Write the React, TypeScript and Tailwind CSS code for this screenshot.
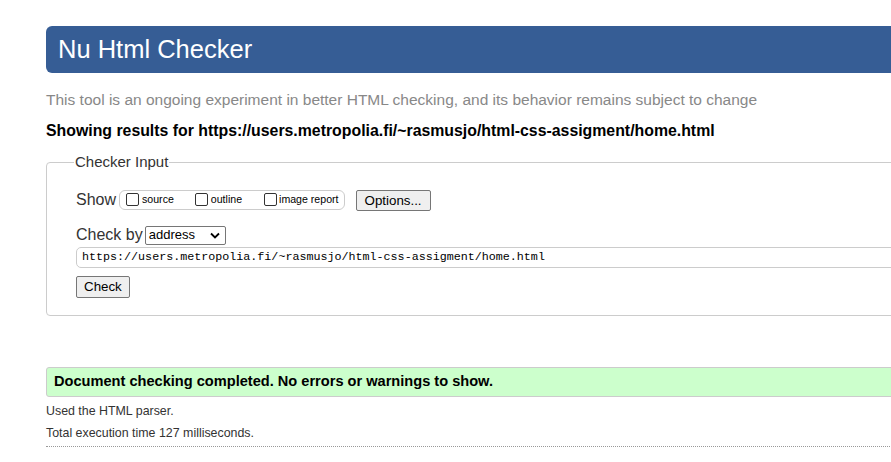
export default function App() {
  return (
    <div className="h-[462px] w-[891px] overflow-hidden bg-white font-['Liberation_Sans',Arial,sans-serif] text-black">
      <div className="ml-[46px] w-[1000px] pt-[26px]">
        <h1 className="flex h-[47px] items-center rounded-l-[6px] bg-[#365d95] pl-[12px] text-[25.5px] font-normal text-white">
          Nu Html Checker
        </h1>

        <p className="mt-[19px] text-[15.5px] leading-[16px] text-[#888888]">
          This tool is an ongoing experiment in better HTML checking, and its behavior remains subject to change
        </p>
        <p className="mt-[14px] text-[15.85px] font-bold leading-[17px]">
          Showing results for https://users.metropolia.fi/~rasmusjo/html-css-assigment/home.html
        </p>

        <fieldset className="mt-[14px] h-[163px] rounded-l-[4px] border border-[#cccccc] px-[29px] pb-[18px]">
          <legend className="ml-[-2px] px-[1px] text-[15px] leading-[18px] text-[#333333]">Checker Input</legend>

          <div className="mt-[17px] flex items-center">
            <span className="text-[16px] text-[#333333]">Show</span>
            <div className="ml-[3px] flex h-[20px] items-center rounded-[6px] border border-[#cccccc] pl-[6px] pr-[5px] text-[10.6px]">
              <label className="flex items-center">
                <span className="h-[13px] w-[13px] rounded-[2px] border border-[#333]" />
                <span className="ml-[3px] mr-[21px]">source</span>
              </label>
              <label className="flex items-center">
                <span className="h-[13px] w-[13px] rounded-[2px] border border-[#333]" />
                <span className="ml-[3px] mr-[22px]">outline</span>
              </label>
              <label className="flex items-center">
                <span className="h-[13px] w-[13px] rounded-[2px] border border-[#333]" />
                <span className="ml-[2px]">image report</span>
              </label>
            </div>
            <button className="ml-[11px] h-[21px] rounded-[2px] border border-[#767676] bg-[#efefef] px-[8px] text-[13.33px]">
              Options...
            </button>
          </div>

          <div className="mt-[11px] flex items-center">
            <span className="text-[16px] text-[#333333]">Check by</span>
            <div className="ml-[2px] flex h-[19px] w-[81px] items-center justify-between rounded-[2px] border border-[#767676] pl-[3px] pr-[5px] text-[13px]">
              <span>address</span>
              <svg width="10" height="7" viewBox="0 0 10 7">
                <path d="M1 1.5 L5 5.5 L9 1.5" fill="none" stroke="#000" strokeWidth="1.8" />
              </svg>
            </div>
          </div>

          <div className="flex h-[21px] items-center rounded-l-[5px] border border-[#cccccc] pl-[5px] font-['Liberation_Mono','DejaVu_Sans_Mono',monospace] text-[11.7px]">
            https://users.metropolia.fi/~rasmusjo/html-css-assigment/home.html
          </div>

          <button className="mt-[8px] h-[22px] rounded-[2px] border border-[#767676] bg-[#efefef] px-[7px] text-[13.33px]">
            Check
          </button>
        </fieldset>

        <div className="mt-[51px] flex h-[30px] items-center rounded-l-[3px] border border-[#cccccc] bg-[#ccffcc] pl-[7px] text-[14.6px] font-bold">
          Document checking completed. No errors or warnings to show.
        </div>

        <p className="mt-[7px] text-[12.4px] leading-[14px] text-[#333333]">Used the HTML parser.</p>
        <p className="mt-[8px] text-[12.4px] leading-[14px] text-[#333333]">Total execution time 127 milliseconds.</p>
        <div className="mt-[6px] border-b border-dotted border-[#999999]" />
      </div>
    </div>
  );
}
